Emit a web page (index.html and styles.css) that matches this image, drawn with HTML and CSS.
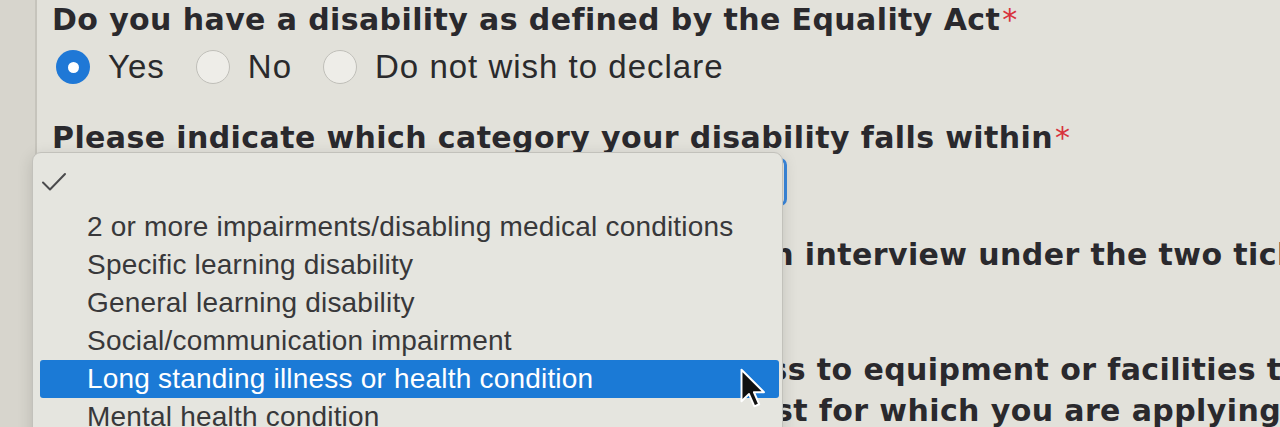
FILE: index.html
```html
<!DOCTYPE html>
<html lang="en">
<head>
<meta charset="utf-8">
<title>Equality monitoring</title>
<link rel="stylesheet" href="styles.css">
</head>
<body>
<div class="page">
  <form class="form">
    <h2 class="q q1">Do you have a disability as defined by the Equality Act<span class="req">*</span></h2>
    <div class="radios">
      <label class="radio"><span class="dot on"></span><span class="rl">Yes</span></label>
      <label class="radio"><span class="dot"></span><span class="rl">No</span></label>
      <label class="radio"><span class="dot"></span><span class="rl">Do not wish to declare</span></label>
    </div>
    <h2 class="q q2">Please indicate which category your disability falls within<span class="req">*</span></h2>
    <div class="select"></div>
    <p class="q q3"><span class="lead lead-a">an</span> interview under the two ticks scheme</p>
    <p class="q q4"><span class="lead lead-b">access</span> to equipment or facilities that will help you<br><span class="lead lead-c">post</span> for which you are applying</p>
  </form>
</div>
<div class="menu">
  <div class="opt opt-check">
    <svg class="tick" viewBox="0 0 26 20" width="26" height="20"><path d="M2 10.5 L9 17.5 L24 2" fill="none" stroke="#4a4a4c" stroke-width="2" stroke-linecap="round" stroke-linejoin="round"/></svg>
  </div>
  <ul class="opts">
    <li class="opt">2 or more impairments/disabling medical conditions</li>
    <li class="opt">Specific learning disability</li>
    <li class="opt">General learning disability</li>
    <li class="opt">Social/communication impairment</li>
    <li class="opt sel">Long standing illness or health condition</li>
    <li class="opt">Mental health condition</li>
  </ul>
</div>
<svg class="cursor" viewBox="0 0 18 27" width="27" height="41"><path d="M1 1 L1 22 L6 17.2 L9.6 25.4 L12.8 24 L9.3 16 L16 16 Z" fill="#111" stroke="#fff" stroke-width="1.3" stroke-linejoin="round"/></svg>
</body>
</html>
```

FILE: styles.css
```css
html, body {
  margin: 0;
  height: 100%;
}
body {
  position: relative;
  overflow: hidden;
  background: #d7d5cd;
  font-family: "DejaVu Sans", Verdana, sans-serif;
  color: #2a292d;
}
.page {
  margin-left: 35px;
  border-left: 2px solid #c6c4bc;
  background: #e2e1da;
  height: 427px;
  padding-left: 15px;
}
.form {
  margin: 0;
  padding-top: 2px;
}
.q {
  margin: 0;
  font-size: 30px;
  font-weight: 700;
  line-height: 36px;
  letter-spacing: 0.4px;
  white-space: nowrap;
}
.req {
  color: #d8323c;
  font-weight: 400;
  margin-left: 2px;
}
.radios {
  display: flex;
  align-items: center;
  gap: 31px;
  margin-top: 12px;
  margin-left: 4px;
  height: 34px;
}
.radio {
  display: flex;
  align-items: center;
  gap: 18px;
  font-family: "Liberation Sans", Arial, sans-serif;
  font-size: 33px;
  letter-spacing: 1px;
  color: #2a2a2c;
}
.dot {
  width: 34px;
  height: 34px;
  border-radius: 50%;
  border: 1px solid #c0bfb9;
  background: #eeede8;
  box-sizing: border-box;
  display: flex;
  align-items: center;
  justify-content: center;
}
.dot.on {
  border: none;
  background: #1f78d6;
}
.dot.on::after {
  content: "";
  width: 11px;
  height: 11px;
  border-radius: 50%;
  background: #fff;
}
.q2 {
  margin-top: 36px;
}
.select {
  margin-top: 2px;
  width: 735px;
  height: 48px;
  box-sizing: border-box;
  border: 3px solid #3a87dc;
  border-radius: 7px;
  background: #e8e8e3;
}
.q3 {
  margin-top: 31px;
}
.q4 {
  margin-top: 76px;
  line-height: 41px;
}
.lead {
  display: inline-block;
  text-align: right;
  white-space: nowrap;
}
.lead-a { width: 742px; }
.lead-b { width: 754px; }
.lead-c { width: 756px; }

.menu {
  position: absolute;
  left: 32px;
  top: 152px;
  width: 751px;
  height: 300px;
  box-sizing: border-box;
  padding-top: 8px;
  border: 1px solid #c2c1bb;
  border-radius: 9px;
  background: #e5e5df;
  box-shadow: 0 4px 16px rgba(0, 0, 0, 0.14);
  font-family: "Liberation Sans", Arial, sans-serif;
  font-size: 28px;
  letter-spacing: 0.2px;
  color: #38383a;
}
.opts {
  list-style: none;
  margin: 9px 0 0;
  padding: 0;
}
.opt {
  height: 38px;
  line-height: 38px;
  margin: 0 3px 0 7px;
  padding-left: 47px;
  white-space: nowrap;
}
.opt-check {
  display: flex;
  align-items: center;
  padding-left: 1px;
  padding-top: 3px;
  box-sizing: border-box;
}
.opt.sel {
  background: #1b7ad6;
  color: #fff;
  border-radius: 3px;
}
.cursor {
  position: absolute;
  left: 740px;
  top: 368px;
}
```
